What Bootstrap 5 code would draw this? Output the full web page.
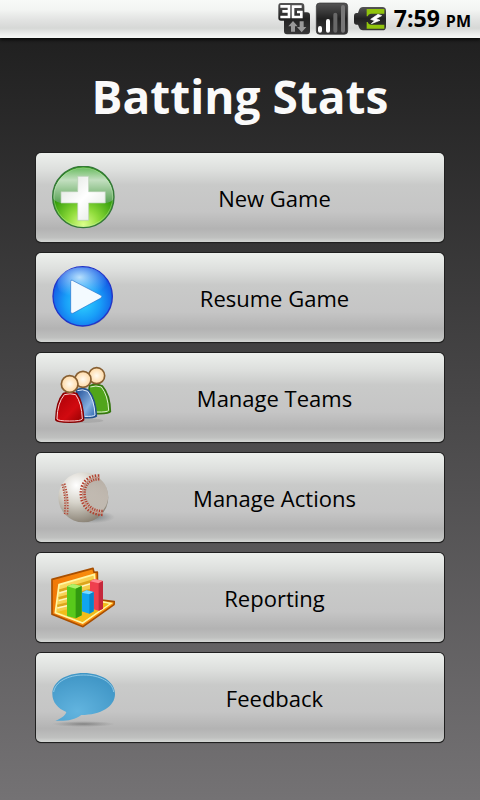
<!DOCTYPE html>
<html lang="en">
<head>
<meta charset="utf-8">
<meta name="viewport" content="width=device-width, initial-scale=1">
<title>Batting Stats</title>
<link href="https://cdn.jsdelivr.net/npm/bootstrap@5.3.0/dist/css/bootstrap.min.css" rel="stylesheet">
<style>
body{font-family:"Open Sans","Noto Sans",sans-serif;background:linear-gradient(#1c1c1c,#747274);color:#fafafa}
.status-bar{height:38px;padding:0 9px;gap:6px;color:#000;background:linear-gradient(#f8faf8 0,#f3f5f3 25%,#e2e3e2 52%,#d6d8d6 74%,#e9ebe9 88%,#f6f8f6 100%);box-shadow:0 2px 3px #080a08}
.clock{font-size:23px;line-height:38px;font-weight:700}
.clock small{font-size:16px}
.screen-title{font-size:46px;line-height:64px;font-weight:700;margin:26px 0 25px}
.menu-list{padding:0 36px;gap:11px}
.menu-btn{height:89px;padding:0 10px 0 15px;border:0;border-radius:5px;color:#000;font-size:22px;line-height:32px;box-shadow:0 0 0 1px #202020,0 1px 1px #111;background:linear-gradient(#edf0ed 0,#dcdedc 20%,#c9cac9 36%,#c5c5c5 66%,#b3b3b3 85%,#bfc0bf 95%,#d3d6d3 100%)}
.menu-btn:hover,.menu-btn:active{color:#000}
</style>
<script src="https://cdn.jsdelivr.net/npm/bootstrap@5.3.0/dist/js/bootstrap.bundle.min.js" defer></script>
</head>
<body class="min-vh-100">
<header class="status-bar d-flex align-items-center justify-content-end">
<svg width="110" height="34" viewBox="27 6 330 102" role="img" aria-label="3G, signal, battery charging">
<defs><linearGradient id="dk" x2="0" y2="1"><stop stop-color="#555"/><stop offset=".5" stop-color="#222"/><stop offset="1" stop-color="#383838"/></linearGradient></defs>
<path d="M36 9h60q10 0 10 10v18h8q9 0 9 9v48q0 9-9 9H54q-9 0-9-9V62h-9q-8 0-8-8V18q0-9 8-9z" fill="url(#dk)"/>
<path d="M34 19h26v32H34M40 34h20M98 20H72v31h25V36H84" fill="none" stroke="#fff" stroke-width="8"/>
<path d="M72 63l14 16h-8v16H66V79h-8zM98 97L84 81h8V64h12v17h8z" fill="#999"/>
<rect x="142" y="9" width="94" height="94" rx="10" fill="url(#dk)" stroke="#333" stroke-width="2"/>
<g stroke-width="12" stroke-linecap="round"><path d="M153 92v-8M177 92V63" stroke="#fff"/><path d="M199 92V44" stroke="#686868"/><path d="M222 92V21" stroke="#777"/></g>
<path d="M282 21h58q11 0 11 11v48q0 11-11 11h-58q-9 0-12-9l-3-8h-4q-8 0-8-8V48q0-9 8-9h4l3-9q3-9 12-9z" fill="url(#dk)"/>
<path d="M293 27h53v14h-40q-8 0-10 8h-3zM293 86h53V74h-40q-8 0-10-8h-3z" fill="#91c40c"/>
<path d="M327 43l-22 15 12 4-10 9 26-10-12-5 17-9z" fill="#fff" stroke="#fff" stroke-width="2"/>
</svg>
<time class="clock" datetime="19:59">7:59 <small>PM</small></time>
</header>
<main>
<h1 class="screen-title text-center">Batting Stats</h1>
<nav class="menu-list d-grid pb-5" aria-label="Main menu">
<button type="button" class="btn menu-btn d-flex align-items-center"><svg class="flex-shrink-0" width="64" height="64" viewBox="63 60 192 192" aria-hidden="true">
<defs><radialGradient id="g1" cx=".5" cy=".95" r=".65"><stop stop-color="#ddff8c"/><stop offset=".4" stop-color="#8edb3a"/><stop offset="1" stop-color="#209000"/></radialGradient><linearGradient id="g2" x2="0" y2="1"><stop stop-color="#6bbd62"/><stop offset=".35" stop-color="#c3dfc0"/><stop offset="1" stop-color="#59a355"/></linearGradient><linearGradient id="g3" x2="1" y2="1"><stop stop-color="#dce2dc"/><stop offset=".5" stop-color="#fff"/><stop offset="1" stop-color="#dfe5df"/></linearGradient></defs>
<circle cx="160" cy="153" r="92" fill="url(#g1)"/><path d="M68 157a92 92 0 1 1 184 0q-8 16-36 14H104q-25 2-36-14z" fill="url(#g2)"/>
<circle cx="160" cy="153" r="92" fill="none" stroke="#347839" stroke-width="4"/><circle cx="160" cy="153" r="88" fill="none" stroke="#c5edb5" stroke-opacity=".6" stroke-width="2"/>
<path d="M143 91h33v46h50v34h-50v52h-33v-52H93v-34h50z" fill="url(#g3)" stroke="#b5cfb2" stroke-width="2"/></svg><span class="flex-grow-1">New Game</span></button>
<button type="button" class="btn menu-btn d-flex align-items-center"><svg class="flex-shrink-0" width="64" height="64" viewBox="63 48 192 192" aria-hidden="true">
<defs><radialGradient id="b1" cx=".5" cy=".6" r=".6"><stop stop-color="#30d5ff"/><stop offset=".5" stop-color="#189df8"/><stop offset="1" stop-color="#124be0"/></radialGradient><radialGradient id="b2" cx=".45" cy=".3" r=".6"><stop stop-color="#d6f1ff" stop-opacity=".85"/><stop offset="1" stop-color="#9ddcff" stop-opacity="0"/></radialGradient></defs>
<circle cx="160" cy="142" r="89" fill="#777" opacity=".3"/><circle cx="158" cy="139" r="89" fill="url(#b1)" stroke="#2234c8" stroke-width="4"/>
<ellipse cx="156" cy="102" rx="74" ry="50" fill="url(#b2)"/>
<path d="M127 91l86 45q5 4 0 8l-84 46q-7 2-7-5V94q0-5 5-3z" fill="#f3faff" stroke="#1c68c7" stroke-opacity=".6" stroke-width="3"/></svg><span class="flex-grow-1">Resume Game</span></button>
<button type="button" class="btn menu-btn d-flex align-items-center"><svg class="flex-shrink-0" width="64" height="64" viewBox="63 48 192 192" aria-hidden="true">
<defs><radialGradient id="hd"><stop stop-color="#fffaf0"/><stop offset="1" stop-color="#ffd9a5"/></radialGradient><linearGradient id="rd" x2="1" y2="1"><stop stop-color="#a80006"/><stop offset=".6" stop-color="#d20a10"/><stop offset="1" stop-color="#8e0000"/></linearGradient><linearGradient id="bl" x2="1" y2="1"><stop stop-color="#1c4b94"/><stop offset=".6" stop-color="#86afe0"/><stop offset="1" stop-color="#2460aa"/></linearGradient></defs>
<ellipse cx="150" cy="212" rx="70" ry="7" fill="#777" opacity=".25"/>
<path d="M179 107q18-7 38 1 23 26 24 77-4 7-40 6-32-1-34-10z" fill="#51a51b" stroke="#34750f" stroke-width="5"/><path d="M181 111q17-6 33 0 20 25 22 70-4 6-36 5" fill="none" stroke="#dff0cf" stroke-width="3"/>
<circle cx="200" cy="77" r="24" fill="url(#hd)" stroke="#875f32" stroke-width="5"/>
<path d="M139 120q20-9 36 1 22 26 24 77-7 6-47 5z" fill="url(#bl)" stroke="#24518c" stroke-width="5"/><path d="M142 122q16-6 31 2 20 26 22 71-5 5-30 4" fill="none" stroke="#dbe8f8" stroke-width="3"/>
<circle cx="159" cy="88" r="24" fill="url(#hd)" stroke="#875f32" stroke-width="5"/>
<path d="M100 130q19-6 40 0 20 26 21 80-4 7-43 7-37 0-41-7 1-55 23-80z" fill="url(#rd)" stroke="#840000" stroke-width="4"/><path d="M103 134q17-5 34 0 18 25 20 73-4 6-39 6-33 0-37-6 1-48 22-73z" fill="none" stroke="#f7d0d0" stroke-width="3"/>
<circle cx="119" cy="102" r="25" fill="url(#hd)" stroke="#875f32" stroke-width="5"/></svg><span class="flex-grow-1">Manage Teams</span></button>
<button type="button" class="btn menu-btn d-flex align-items-center"><svg class="flex-shrink-0" width="64" height="64" viewBox="63 48 192 192" aria-hidden="true">
<defs><radialGradient id="ball" cx=".36" cy=".26" r=".78"><stop stop-color="#fff"/><stop offset=".45" stop-color="#d6d3ca"/><stop offset="1" stop-color="#888073"/></radialGradient><linearGradient id="pt" x2="1" y2="1"><stop stop-color="#a0958b"/><stop offset="1" stop-color="#dcd5ce"/></linearGradient><radialGradient id="sh"><stop stop-color="#596b70" stop-opacity=".8"/><stop offset="1" stop-color="#777" stop-opacity="0"/></radialGradient></defs>
<ellipse cx="185" cy="201" rx="70" ry="19" fill="url(#sh)"/>
<circle cx="160" cy="142" r="75" fill="url(#ball)"/>
<path d="M205 84q-38 0-45 38-5 48 50 66 20-12 25-46 0-38-30-58z" fill="url(#pt)" opacity=".7"/>
<g fill="none" stroke="#b3402f"><path d="M208 82c-37 0-51 24-50 51 1 32 24 56 61 56" stroke-width="19" stroke-dasharray="4 4"/><path d="M100 102q13 43 8 91" stroke-width="13" stroke-dasharray="4 4"/></g>
<g fill="none" stroke="#d2bcae" stroke-width="4"><path d="M208 82c-37 0-51 24-50 51 1 32 24 56 61 56"/><path d="M100 102q13 43 8 91"/></g>
<g fill="none" stroke="#8b3d31" stroke-width="1"><path d="M208 82c-37 0-51 24-50 51 1 32 24 56 61 56M100 102q13 43 8 91"/></g></svg><span class="flex-grow-1">Manage Actions</span></button>
<button type="button" class="btn menu-btn d-flex align-items-center"><svg class="flex-shrink-0" width="64" height="64" viewBox="63 48 192 192" aria-hidden="true">
<defs><linearGradient id="og"><stop stop-color="#f07808"/><stop offset="1" stop-color="#ff9a10"/></linearGradient><linearGradient id="yl" x2="1" y2="1"><stop stop-color="#ffe577"/><stop offset="1" stop-color="#e7a908"/></linearGradient></defs>
<path d="M66 88l123-33 3 12 10-1 1 83 50 6-1 9-93 66-93-37z" fill="url(#og)" stroke="#a84f00" stroke-width="5" stroke-linejoin="round"/>
<path d="M87 104l106-31 6 79 43 8-84 59-82-31z" fill="url(#yl)" stroke="#fff7a3" stroke-width="5"/>
<path d="M88 122l105-31M86 145l107-28M82 168l112-26" stroke="#dca51c" stroke-width="8"/><path d="M88 129l105-31M86 152l107-28M82 174l112-26" stroke="#fff4bd" stroke-width="4"/>
<path d="M82 186l113-31 42 7-79 53z" fill="#f1bd19"/>
<path d="M180 94l14-7 25 6v83l-13 6-26-7z" fill="#ef3f4e"/><path d="M180 94l14-7 25 6-13 7z" fill="#ff8992"/><path d="M206 100l13-7v83l-13 6z" fill="#c5283b"/>
<path d="M155 128l14-7 22 5v58l-13 7-23-7z" fill="#10a5ef"/><path d="M155 128l14-7 22 5-13 7z" fill="#78dbff"/><path d="M178 133l13-7v58l-13 7z" fill="#0784ca"/>
<path d="M111 109l17-7 27 6v88l-18 9-26-7z" fill="#58c91b"/><path d="M111 109l17-7 27 6-18 8z" fill="#b0f06b"/><path d="M137 116l18-8v88l-18 9z" fill="#329910"/></svg><span class="flex-grow-1">Reporting</span></button>
<button type="button" class="btn menu-btn d-flex align-items-center"><svg class="flex-shrink-0" width="64" height="64" viewBox="63 48 192 192" aria-hidden="true">
<defs><radialGradient id="fb" cx=".4" cy=".8" r=".8"><stop stop-color="#62b4df"/><stop offset="1" stop-color="#3f95c5"/></radialGradient><radialGradient id="fs"><stop stop-color="#666" stop-opacity=".65"/><stop offset="1" stop-color="#777" stop-opacity="0"/></radialGradient></defs>
<ellipse cx="160" cy="222" rx="95" ry="9" fill="url(#fs)"/>
<path d="M161 69c53 0 94 26 94 63 0 38-43 63-101 63-21 16-49 19-78 17 17-6 29-14 33-26-25-10-42-29-42-54 0-37 41-63 94-63z" fill="url(#fb)"/>
<path d="M71 126c4-29 42-51 90-51 49 0 87 22 90 51" fill="none" stroke="#b4dff3" stroke-width="2"/></svg><span class="flex-grow-1">Feedback</span></button>
</nav>
</main>
</body>
</html>
